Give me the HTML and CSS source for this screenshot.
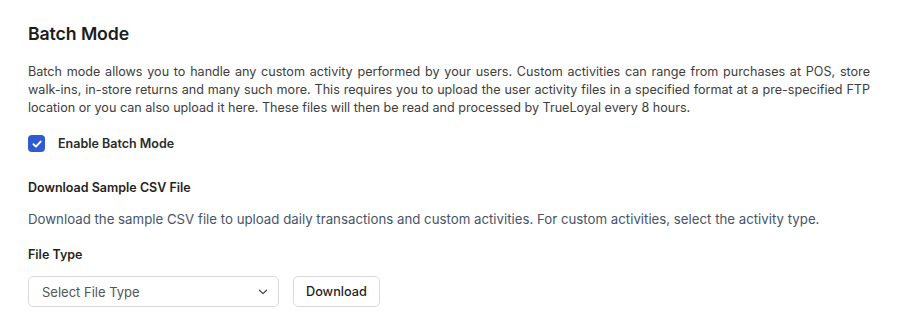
FILE: index.html
```html
<!DOCTYPE html>
<html>
<head>
<meta charset="utf-8">
<link rel="stylesheet" href="styles.css">
</head>
<body>
<div class="page">
  <h2 class="title">Batch Mode</h2>
  <p class="intro">Batch mode allows you to handle any custom activity performed by your users. Custom activities can range from purchases at POS, store walk-ins, in-store returns and many such more. This requires you to upload the user activity files in a specified format at a pre-specified FTP location or you can also upload it here. These files will then be read and processed by TrueLoyal every 8 hours.</p>
  <label class="check">
    <span class="box"><svg width="12" height="12" viewBox="0 0 12 12"><path d="M2.5 6.2 L5 8.6 L9.6 3.6" fill="none" stroke="#fff" stroke-width="2" stroke-linecap="round" stroke-linejoin="round"/></svg></span>
    <span class="check-label">Enable Batch Mode</span>
  </label>
  <h3 class="sub">Download Sample CSV File</h3>
  <p class="desc">Download the sample CSV file to upload daily transactions and custom activities. For custom activities, select the activity type.</p>
  <div class="field-label">File Type</div>
  <div class="row">
    <div class="select">
      <span>Select File Type</span>
      <svg width="10" height="6" viewBox="0 0 10 6"><path d="M1.5 1.2 L5 4.6 L8.5 1.2" fill="none" stroke="#444" stroke-width="1.2" stroke-linecap="round" stroke-linejoin="round"/></svg>
    </div>
    <button class="btn">Download</button>
  </div>
</div>
</body>
</html>
```
FILE: styles.css
```css
* { box-sizing: border-box; }
body { margin: 0; background: #fff; font-family: Inter, "Noto Sans", sans-serif; color: #1f1f1f; }
.page { padding: 22px 27px 0 28px; }
.title { margin: 0; font-size: 17.7px; font-weight: 600; line-height: 24px; color: #1c1c1c; letter-spacing: -0.1px; }
.intro { margin: 17px 0 0; font-size: 12.6px; line-height: 18px; color: #3d3d3d; text-align: justify; }
.check { display: flex; align-items: center; gap: 13px; margin-top: 18px; }
.box { width: 17px; height: 17px; border-radius: 4px; background: #2e5bd2; display: flex; align-items: center; justify-content: center; }
.check-label { font-size: 12.5px; font-weight: 600; color: #2a2a2a; }
.sub { margin: 27px 0 0; font-size: 12.5px; font-weight: 600; line-height: 18px; color: #1f1f1f; }
.desc { margin: 13px 0 0; font-size: 13.25px; line-height: 18px; color: #475467; }
.field-label { margin-top: 18px; font-size: 12.5px; font-weight: 600; line-height: 18px; color: #1f1f1f; }
.row { display: flex; gap: 14px; margin-top: 12px; align-items: center; }
.select { width: 251px; height: 31px; border: 1px solid #d9d9d9; border-radius: 5px; display: flex; align-items: center; justify-content: space-between; padding: 0 10px 0 13px; font-size: 13px; color: #555; }
.btn { height: 31px; padding: 0 12px; border: 1px solid #d9d9d9; border-radius: 5px; background: #fff; font-family: inherit; font-size: 12.7px; font-weight: 500; color: #1f1f1f; }
```
